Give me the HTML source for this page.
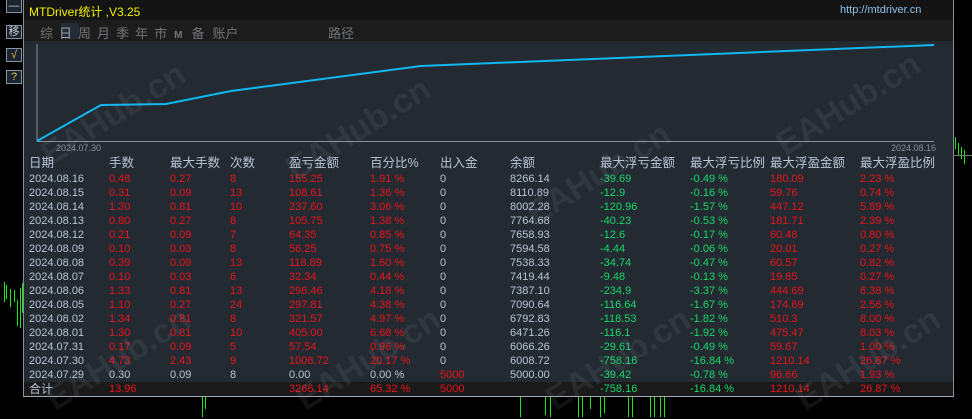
<!DOCTYPE html>
<html><head><meta charset="utf-8"><style>
*{margin:0;padding:0;box-sizing:border-box}
body{width:972px;height:417px;background:#000;position:relative;overflow:hidden;font-family:"Liberation Sans","Noto Sans CJK SC",sans-serif}
.a{position:absolute;white-space:nowrap}
.btn{position:absolute;left:6px;width:16px;height:14px;border:1px solid #8a95a3;background:#1a2330;color:#ccc;font-size:11px;text-align:center;line-height:12px}
#panel{position:absolute;left:23px;top:0;width:931px;height:397px;border-left:1px solid #8a9099;border-right:1px solid #8a9099;border-bottom:1px solid #a0a8b0;background:#242a32}
.row{position:absolute;left:0;width:929px;height:14px;font-size:11px;line-height:14px}
.row span{position:absolute;top:0}
.w{color:#b8c4d4}.r{color:#e8131b}.g{color:#14d869}
.hd span{color:#b8c4d4;font-size:12.5px}
.wm{position:absolute;color:rgba(170,175,185,0.10);font-size:34px;font-weight:bold;transform:rotate(-32deg);transform-origin:left bottom;white-space:nowrap;z-index:5}
.gb{position:absolute;width:1px;background:#1de81d}
</style></head><body>
<div class="btn" style="top:-1px">—</div>
<div class="btn" style="top:25px">移</div>
<div class="btn" style="top:48px;color:#e0c040">√</div>
<div class="btn" style="top:70px;color:#e0c040">?</div>
<div class="gb" style="left:4px;top:282px;height:20px"></div><div class="gb" style="left:6px;top:285px;height:14px"></div><div class="gb" style="left:10px;top:289px;height:18px"></div><div class="gb" style="left:14px;top:290px;height:12px"></div><div class="gb" style="left:17px;top:300px;height:26px"></div><div class="gb" style="left:20px;top:288px;height:40px"></div><div class="gb" style="left:22px;top:283px;height:30px"></div>
<div class="gb" style="left:202px;top:397px;height:20px"></div><div class="gb" style="left:205px;top:397px;height:12px"></div><div class="gb" style="left:520px;top:397px;height:20px"></div><div class="gb" style="left:545px;top:397px;height:18px"></div><div class="gb" style="left:550px;top:397px;height:20px"></div><div class="gb" style="left:578px;top:397px;height:20px"></div><div class="gb" style="left:582px;top:397px;height:20px"></div><div class="gb" style="left:590px;top:397px;height:12px"></div><div class="gb" style="left:600px;top:397px;height:20px"></div><div class="gb" style="left:604px;top:397px;height:16px"></div><div class="gb" style="left:628px;top:397px;height:20px"></div><div class="gb" style="left:632px;top:397px;height:20px"></div><div class="gb" style="left:650px;top:397px;height:20px"></div><div class="gb" style="left:654px;top:397px;height:20px"></div><div class="gb" style="left:660px;top:397px;height:20px"></div><div class="gb" style="left:664px;top:397px;height:20px"></div>
<div class="gb" style="left:955px;top:137px;height:12px"></div><div class="gb" style="left:958px;top:143px;height:12px"></div><div class="gb" style="left:961px;top:147px;height:12px"></div><div class="gb" style="left:964px;top:150px;height:14px"></div>
<div class="a" style="left:954px;top:155px;width:18px;height:1px;background:#777"></div>
<div id="panel">
 <div class="a" style="left:0;top:0;width:929px;height:20px;background:#141414"></div>
 <div class="a" style="left:0;top:20px;width:929px;height:21px;background:#1c1c1c"></div>
 <div class="a" style="left:5px;top:3px;font-size:12px;color:#f0f000">MTDriver统计 ,V3.25</div>
 <div class="a" style="left:816px;top:4px;font-size:11px;color:#8fc0e8">http://mtdriver.cn</div>
 <div class="a" style="left:37px;top:23px;width:18px;height:16px;background:#252b35"></div>
 <div class="a" style="left:16px;top:23px;font-size:13px;color:#707478">
  <span style="margin-right:6px">综</span><span style="margin-right:6px;color:#9aa0a8">日</span><span style="margin-right:6px">周</span><span style="margin-right:6px">月</span><span style="margin-right:6px">季</span><span style="margin-right:6px">年</span><span style="margin-right:7px">市</span><span style="margin-right:9px;font-size:10px;font-weight:bold">M</span><span style="margin-right:8px">备</span><span>账户</span></div>
 <div class="a" style="left:304px;top:23px;font-size:13px;color:#707478">路径</div>
 <svg class="a" style="left:0;top:0" width="929" height="160">
  <line x1="13" y1="44" x2="13" y2="141.5" stroke="#8a9099"/>
  <line x1="13" y1="141.5" x2="910" y2="141.5" stroke="#8a9099"/>
  <polyline fill="none" stroke="#10b8f0" stroke-width="2" points="13,141 77,105 142,104 207,91 397,66 910,45"/>
 </svg>
 <div class="a" style="left:32px;top:143px;font-size:9px;color:#8a9099">2024.07.30</div>
 <div class="a" style="left:867px;top:143px;font-size:9px;color:#8a9099">2024.08.16</div>
 <div class="row hd" style="top:156px;height:16px"><span style="left:5px">日期</span><span style="left:85px">手数</span><span style="left:146px">最大手数</span><span style="left:206px">次数</span><span style="left:265px">盈亏金额</span><span style="left:346px">百分比%</span><span style="left:416px">出入金</span><span style="left:486px">余额</span><span style="left:576px">最大浮亏金额</span><span style="left:666px">最大浮亏比例</span><span style="left:746px">最大浮盈金额</span><span style="left:836px">最大浮盈比例</span></div>
 <div id="rows"></div>
 <div class="a" style="left:0;top:382px;width:929px;height:14px;background:#1a1a1a"></div>
 <div class="row" style="top:382px"><span class="w" style="left:5px;font-size:12px">合计</span><span class="r" style="left:85px">13.96</span><span class="r" style="left:265px">3266.14</span><span class="r" style="left:346px">65.32 %</span><span class="r" style="left:416px">5000</span><span class="g" style="left:576px">-758.16</span><span class="g" style="left:666px">-16.84 %</span><span class="r" style="left:746px">1210.14</span><span class="r" style="left:836px">26.87 %</span></div>
</div>
<div class="wm" style="left:55px;top:135px">EAHub.cn</div>
<div class="wm" style="left:300px;top:150px">EAHub.cn</div>
<div class="wm" style="left:540px;top:195px">EAHub.cn</div>
<div class="wm" style="left:790px;top:125px">EAHub.cn</div>
<div class="wm" style="left:60px;top:380px">EAHub.cn</div>
<div class="wm" style="left:310px;top:380px">EAHub.cn</div>
<div class="wm" style="left:560px;top:380px">EAHub.cn</div>
<div class="wm" style="left:810px;top:380px">EAHub.cn</div>
<script>
var d=[["2024.08.16","0.48","0.27","8","155.25","1.91 %","0","8266.14","-39.69","-0.49 %","180.09","2.23 %"],
["2024.08.15","0.31","0.09","13","108.61","1.36 %","0","8110.89","-12.9","-0.16 %","59.76","0.74 %"],
["2024.08.14","1.30","0.81","10","237.60","3.06 %","0","8002.28","-120.96","-1.57 %","447.12","5.89 %"],
["2024.08.13","0.80","0.27","8","105.75","1.38 %","0","7764.68","-40.23","-0.53 %","181.71","2.39 %"],
["2024.08.12","0.21","0.09","7","64.35","0.85 %","0","7658.93","-12.6","-0.17 %","60.48","0.80 %"],
["2024.08.09","0.10","0.03","8","56.25","0.75 %","0","7594.58","-4.44","-0.06 %","20.01","0.27 %"],
["2024.08.08","0.39","0.09","13","118.89","1.60 %","0","7538.33","-34.74","-0.47 %","60.57","0.82 %"],
["2024.08.07","0.10","0.03","6","32.34","0.44 %","0","7419.44","-9.48","-0.13 %","19.65","0.27 %"],
["2024.08.06","1.33","0.81","13","296.46","4.18 %","0","7387.10","-234.9","-3.37 %","444.69","6.38 %"],
["2024.08.05","1.10","0.27","24","297.81","4.38 %","0","7090.64","-116.64","-1.67 %","174.69","2.56 %"],
["2024.08.02","1.34","0.81","8","321.57","4.97 %","0","6792.83","-118.53","-1.82 %","510.3","8.00 %"],
["2024.08.01","1.30","0.81","10","405.00","6.68 %","0","6471.26","-116.1","-1.92 %","475.47","8.03 %"],
["2024.07.31","0.17","0.09","5","57.54","0.96 %","0","6066.26","-29.61","-0.49 %","59.67","1.00 %"],
["2024.07.30","4.73","2.43","9","1008.72","20.17 %","0","6008.72","-758.16","-16.84 %","1210.14","26.87 %"],
["2024.07.29","0.30","0.09","8","0.00","0.00 %","5000","5000.00","-39.42","-0.78 %","96.66","1.93 %"]];
var L=[5,85,146,206,265,346,416,486,576,666,746,836];
var h="";
d.forEach(function(r,i){h+='<div class="row" style="top:'+(172+i*14)+'px">';
r.forEach(function(v,j){var c;
if(j==0||j==6||j==7)c="w";else if(j==8||j==9)c="g";else c="r";
if(i==14&&j>=1&&j<=5)c="w";if(i==14&&j==6)c="r";
h+='<span class="'+c+'" style="left:'+L[j]+'px">'+v+'</span>';});h+='</div>';});
document.getElementById("rows").innerHTML=h;
</script>
</body></html>
